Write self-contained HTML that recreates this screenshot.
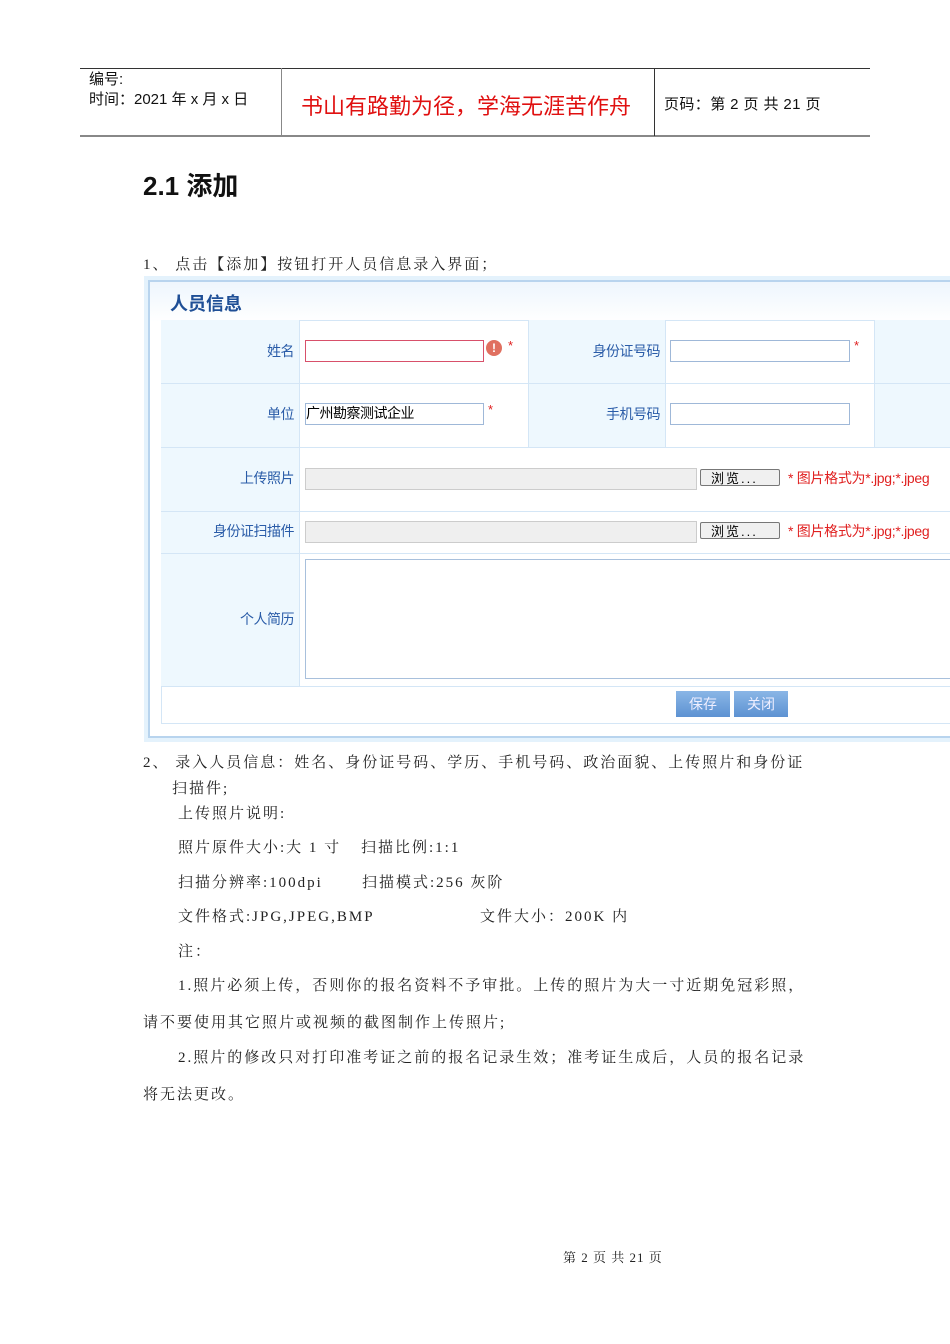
<!DOCTYPE html>
<html><head><meta charset="utf-8"><style>
body{margin:0;width:950px;height:1344px;background:#fff;position:relative;overflow:hidden;font-family:"Liberation Sans","Noto Sans CJK SC",sans-serif}
.a{position:absolute;white-space:nowrap}
.s{font-family:"Liberation Serif","Noto Serif CJK SC",serif;font-size:15px;color:#222;letter-spacing:2px}
.lbl{color:#2a5ca8;font-size:14px;text-align:right;letter-spacing:-0.5px}
.inp{position:absolute;background:#fff;border:1px solid #9fb8d8;height:20px}
.red{color:#e02020}
</style></head><body>
<div class="a" style="left:80px;top:68px;width:790px;height:1px;background:#333"></div>
<div class="a" style="left:80px;top:135px;width:790px;height:2px;background:#888"></div>
<div class="a" style="left:281px;top:68px;width:1px;height:68px;background:#888"></div>
<div class="a" style="left:654px;top:68px;width:1px;height:68px;background:#333"></div>
<div class="a" style="left:89px;top:70px;font-size:15px;line-height:20px;color:#111">编号:<br>时间：2021 年 x 月 x 日</div>
<div class="a" style="left:301px;top:89px;font-size:22px;color:#e01010">书山有路勤为径，学海无涯苦作舟</div>
<div class="a" style="left:664px;top:93px;font-size:15px;color:#111;letter-spacing:0.4px">页码：第 2 页 共 21 页</div>
<div class="a" style="left:143px;top:166px;font-size:26px;font-weight:bold;color:#111">2.1 添加</div>
<div class="a s" style="left:143px;top:253px">1、 点击【添加】按钮打开人员信息录入界面；</div>

<div class="a" style="left:144px;top:276px;width:806px;height:466px;background:#e4f2fc"></div>
<div class="a" style="left:148px;top:280px;width:802px;height:454px;background:linear-gradient(#eef6fd,#fff 40px);border:2px solid #b8d4ee;border-right:none"></div>
<div class="a" style="left:170px;top:290px;font-size:18px;font-weight:bold;color:#1f4f96">人员信息</div>
<div class="a" style="left:161px;top:320px;width:789px;height:402px;background:#fff;border:1px solid #d4e6f6"></div>
<div class="a" style="left:161px;top:320px;width:138px;height:366px;background:#eef8fe"></div>
<div class="a" style="left:528px;top:320px;width:137px;height:127px;background:#eef8fe"></div>
<div class="a" style="left:874px;top:320px;width:76px;height:127px;background:#eef8fe"></div>
<div class="a" style="left:161px;top:383px;width:789px;height:1px;background:#d4e6f6"></div>
<div class="a" style="left:161px;top:447px;width:789px;height:1px;background:#d4e6f6"></div>
<div class="a" style="left:161px;top:511px;width:789px;height:1px;background:#d4e6f6"></div>
<div class="a" style="left:161px;top:553px;width:789px;height:1px;background:#d4e6f6"></div>
<div class="a" style="left:161px;top:686px;width:789px;height:1px;background:#d4e6f6"></div>
<div class="a" style="left:299px;top:320px;width:1px;height:366px;background:#d4e6f6"></div>
<div class="a" style="left:528px;top:320px;width:1px;height:127px;background:#d4e6f6"></div>
<div class="a" style="left:665px;top:320px;width:1px;height:127px;background:#d4e6f6"></div>
<div class="a" style="left:874px;top:320px;width:1px;height:127px;background:#d4e6f6"></div>

<div class="a lbl" style="left:161px;top:341px;width:133px">姓名</div>
<div class="a lbl" style="left:161px;top:404px;width:133px">单位</div>
<div class="a lbl" style="left:161px;top:468px;width:133px">上传照片</div>
<div class="a lbl" style="left:161px;top:521px;width:133px">身份证扫描件</div>
<div class="a lbl" style="left:161px;top:609px;width:133px">个人简历</div>
<div class="a lbl" style="left:528px;top:341px;width:132px">身份证号码</div>
<div class="a lbl" style="left:528px;top:404px;width:132px">手机号码</div>

<div class="inp" style="left:305px;top:340px;width:177px;border-color:#d8506a"></div>
<div class="a" style="left:486px;top:340px;width:16px;height:16px;border-radius:50%;background:#e07060;color:#fff;font-size:12px;font-weight:bold;text-align:center;line-height:16px">!</div>
<div class="a red" style="left:508px;top:338px;font-size:13px">*</div>
<div class="inp" style="left:670px;top:340px;width:178px"></div>
<div class="a red" style="left:854px;top:338px;font-size:13px">*</div>
<div class="inp" style="left:305px;top:403px;width:177px"></div>
<div class="a" style="left:306px;top:403px;font-size:14px;color:#000;letter-spacing:-0.5px">广州勘察测试企业</div>
<div class="a red" style="left:488px;top:402px;font-size:13px">*</div>
<div class="inp" style="left:670px;top:403px;width:178px"></div>

<div class="a" style="left:305px;top:468px;width:390px;height:20px;background:#efefef;border:1px solid #ccc"></div>
<div class="a" style="left:700px;top:469px;width:80px;height:17px;background:#f0f0f0;border:1px solid #777;border-radius:2px;font-size:13px;line-height:17px;padding-left:10px;box-sizing:border-box;letter-spacing:2px">浏览...</div>
<div class="a red" style="left:788px;top:468px;font-size:14px;letter-spacing:-0.3px">* 图片格式为*.jpg;*.jpeg</div>
<div class="a" style="left:305px;top:521px;width:390px;height:20px;background:#efefef;border:1px solid #ccc"></div>
<div class="a" style="left:700px;top:522px;width:80px;height:17px;background:#f0f0f0;border:1px solid #777;border-radius:2px;font-size:13px;line-height:17px;padding-left:10px;box-sizing:border-box;letter-spacing:2px">浏览...</div>
<div class="a red" style="left:788px;top:521px;font-size:14px;letter-spacing:-0.3px">* 图片格式为*.jpg;*.jpeg</div>
<div class="a" style="left:305px;top:559px;width:650px;height:118px;background:#fff;border:1px solid #a8c0dc"></div>

<div class="a" style="left:676px;top:691px;width:54px;height:26px;background:linear-gradient(#8ab6e6,#5d92d2);color:#eef;font-size:14px;text-align:center;line-height:26px">保存</div>
<div class="a" style="left:734px;top:691px;width:54px;height:26px;background:linear-gradient(#8ab6e6,#5d92d2);color:#eef;font-size:14px;text-align:center;line-height:26px">关闭</div>

<div class="a s" style="left:143px;top:751px">2、 录入人员信息：姓名、身份证号码、学历、手机号码、政治面貌、上传照片和身份证</div>
<div class="a s" style="left:172px;top:777px">扫描件;</div>
<div class="a s" style="left:178px;top:802px">上传照片说明:</div>
<div class="a s" style="left:178px;top:836px">照片原件大小:大 1 寸</div>
<div class="a s" style="left:361px;top:836px">扫描比例:1:1</div>
<div class="a s" style="left:178px;top:871px">扫描分辨率:100dpi</div>
<div class="a s" style="left:362px;top:871px">扫描模式:256 灰阶</div>
<div class="a s" style="left:178px;top:905px">文件格式:JPG,JPEG,BMP</div>
<div class="a s" style="left:480px;top:905px">文件大小：200K 内</div>
<div class="a s" style="left:178px;top:940px">注：</div>
<div class="a s" style="left:178px;top:974px">1.照片必须上传，否则你的报名资料不予审批。上传的照片为大一寸近期免冠彩照，</div>
<div class="a s" style="left:143px;top:1011px">请不要使用其它照片或视频的截图制作上传照片;</div>
<div class="a s" style="left:178px;top:1046px">2.照片的修改只对打印准考证之前的报名记录生效；准考证生成后，人员的报名记录</div>
<div class="a s" style="left:143px;top:1083px">将无法更改。</div>
<div class="a s" style="left:563px;top:1247px;font-size:13px;letter-spacing:1px">第 2 页 共 21 页</div>
</body></html>
